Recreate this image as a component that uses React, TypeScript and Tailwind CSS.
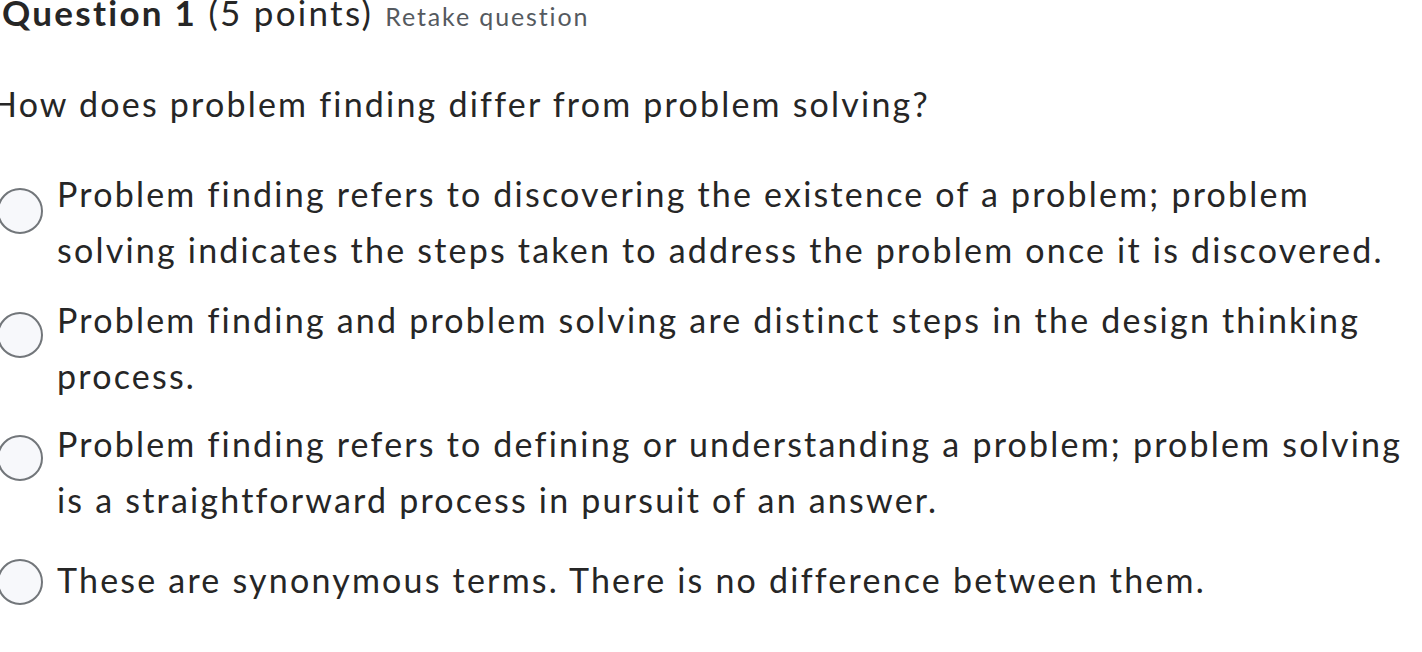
import React from "react";

const options = [
  {
    text: "Problem finding refers to discovering the existence of a problem; problem solving indicates the steps taken to address the problem once it is discovered.",
    mt: "mt-[166px]",
    radio: "mt-[22px]",
  },
  {
    text: "Problem finding and problem solving are distinct steps in the design thinking process.",
    mt: "mt-[14px]",
    radio: "mt-[20px]",
  },
  {
    text: "Problem finding refers to defining or understanding a problem; problem solving is a straightforward process in pursuit of an answer.",
    mt: "mt-[12px]",
    radio: "mt-[19px]",
  },
  {
    text: "These are synonymous terms. There is no difference between them.",
    mt: "mt-[24px]",
    radio: "mt-[7px]",
  },
];

export default function App() {
  return (
    <div
      className="relative w-[1422px] h-[652px] overflow-hidden bg-white text-[#262626]"
      style={{ fontFamily: "Lato, 'Open Sans', sans-serif" }}
    >
      <div className="absolute left-0 top-0 w-full">
        <div className="mt-[-9px] ml-[2px] flex items-baseline leading-[1.2]">
          <span className="text-[35px] tracking-[0.065em]">
            <span className="font-bold">Question 1</span> (5 points)
          </span>
          <span className="text-[25px] ml-[12px] tracking-[0.075em] text-[#555a5f]">Retake question</span>
        </div>
        <div className="mt-[51px] ml-[-9px] text-[34px] leading-[1.2] tracking-[0.065em]">
          How does problem finding differ from problem solving?
        </div>
      </div>
      <div className="flex flex-col">
        {options.map((o, i) => (
          <div key={i} className={`flex ${o.mt}`}>
            <div
              className={`${o.radio} ml-[-3px] w-[46px] h-[46px] shrink-0 rounded-full border-2 border-[#72767a] bg-[#f7f8fb]`}
            />
            <div className="ml-[14px] w-[1353px] text-[34px] leading-[56px] tracking-[0.065em]">{o.text}</div>
          </div>
        ))}
      </div>
    </div>
  );
}
